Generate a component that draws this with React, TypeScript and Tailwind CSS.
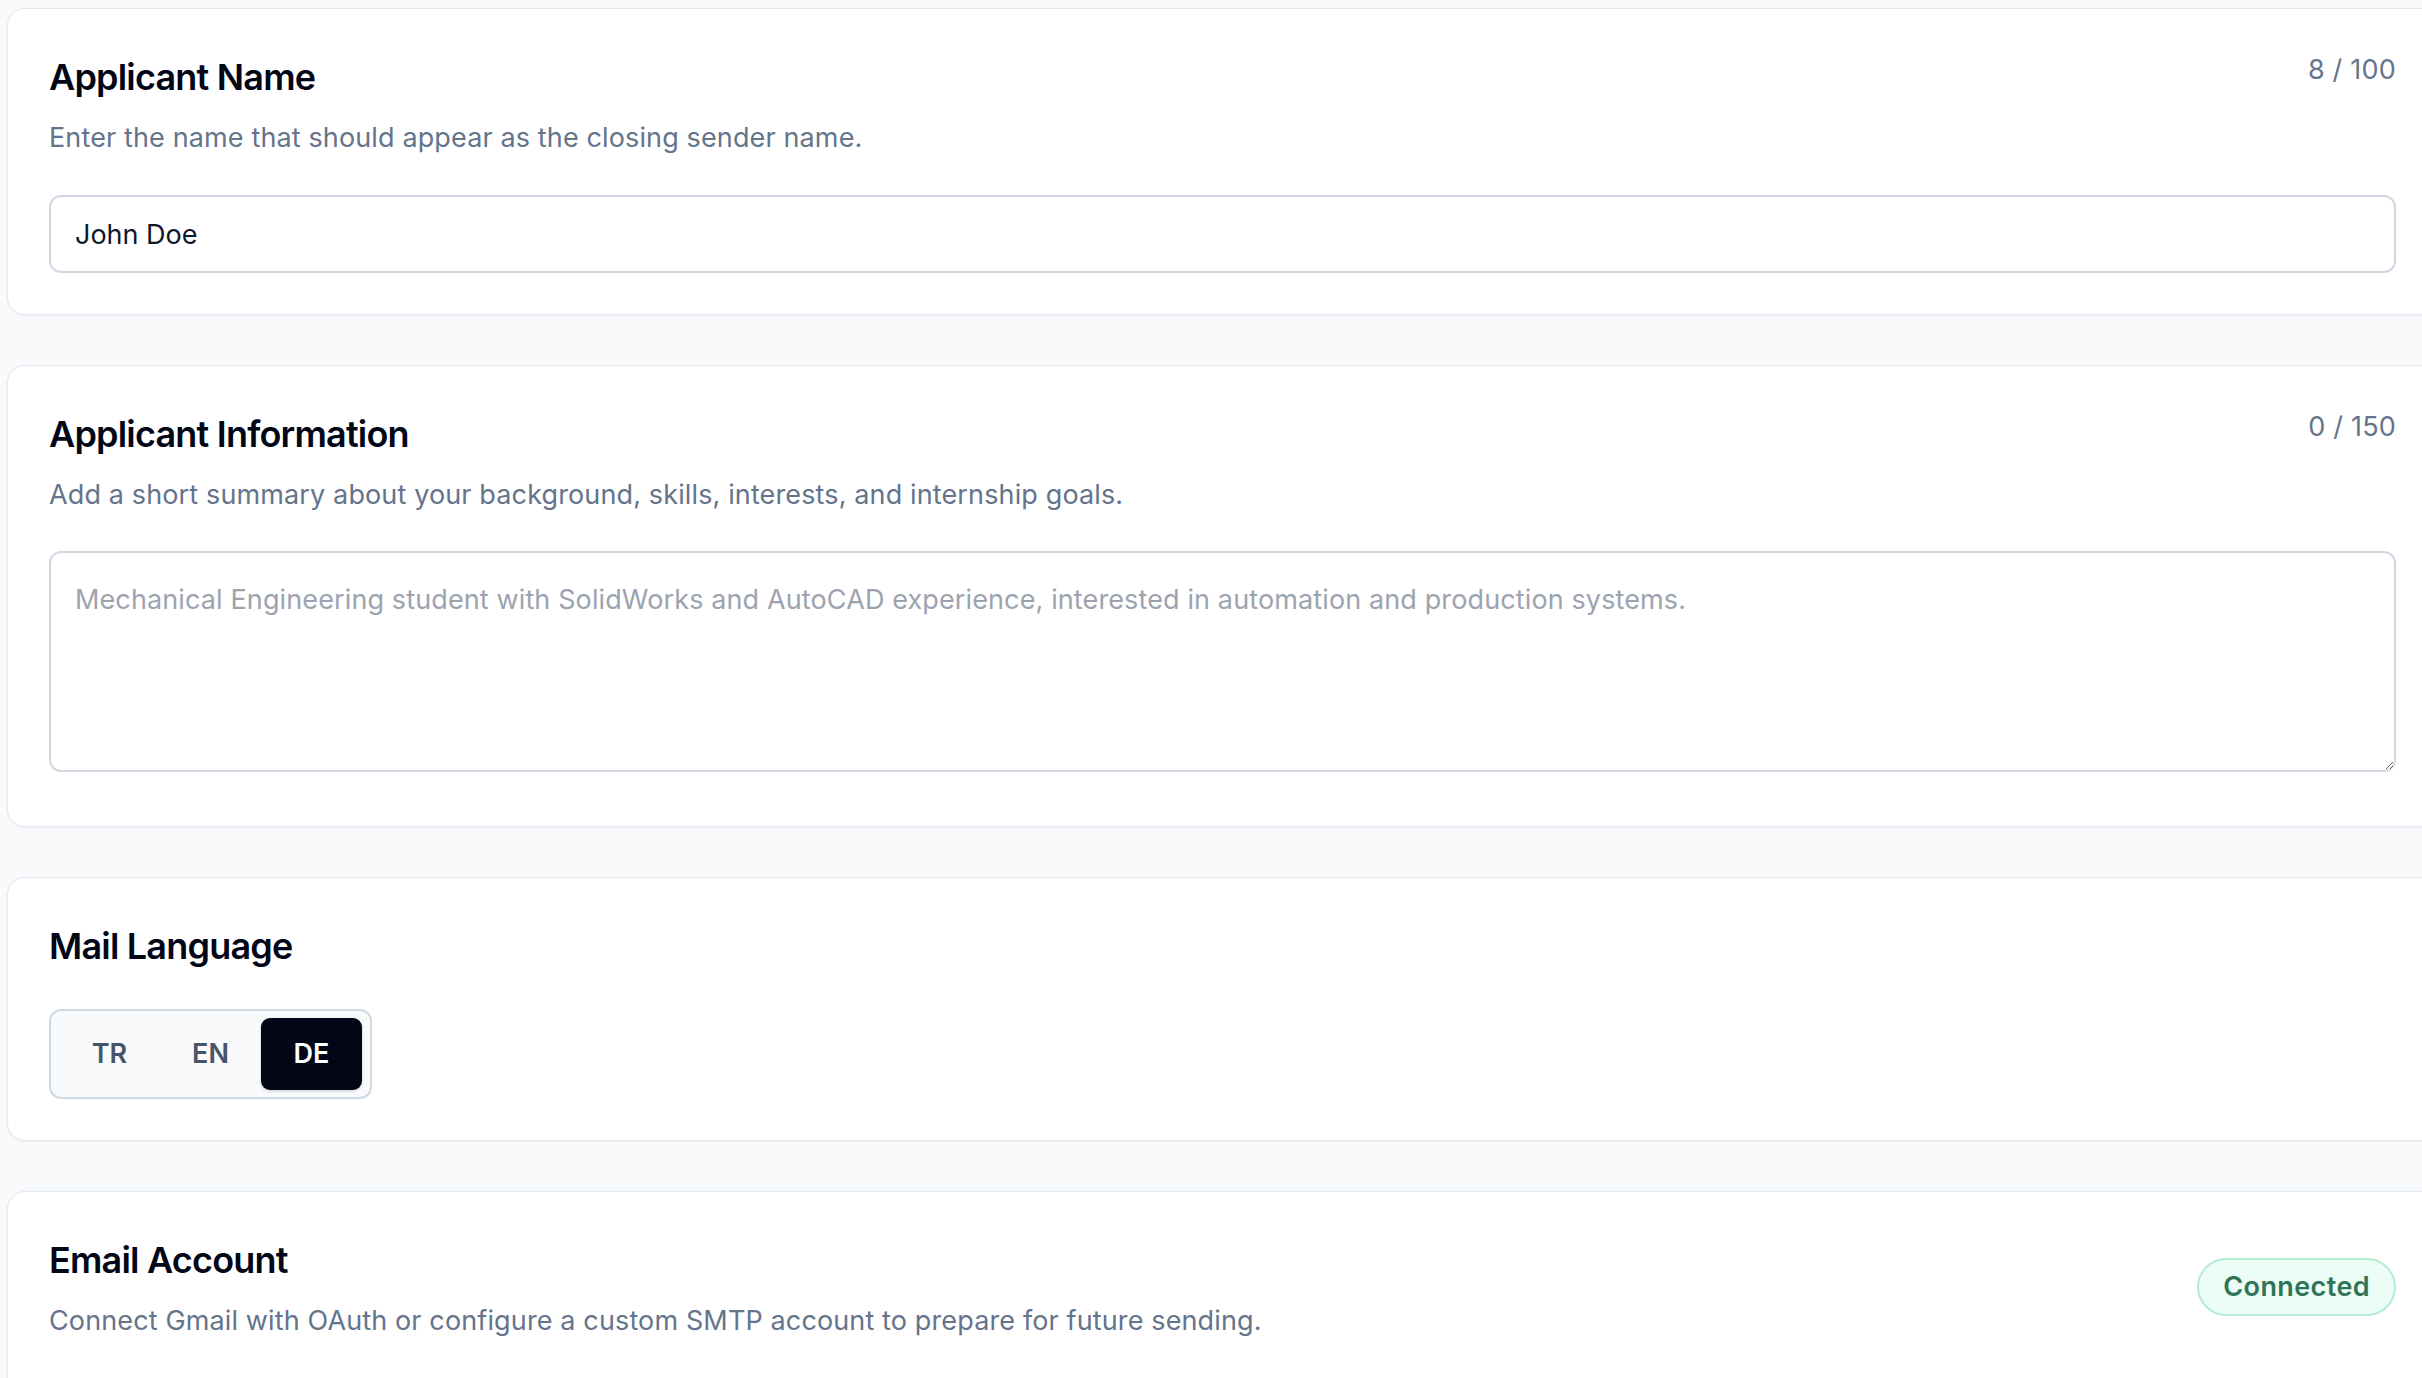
import React from "react";

function Card({ children }: { children: React.ReactNode }) {
  return (
    <section className="w-[2431px] shrink-0 rounded-[18px] border border-[#e2e8f0] bg-white px-[41px] pt-[41px] pb-[41px] shadow-[0_1px_3px_rgba(15,23,42,0.05)]">
      {children}
    </section>
  );
}

function Title({ children }: { children: React.ReactNode }) {
  return (
    <h2 className="pt-[1px] text-[36px] leading-[53px] font-semibold tracking-[-0.8px] text-[#020617]">
      {children}
    </h2>
  );
}

function Desc({ children }: { children: React.ReactNode }) {
  return (
    <p className="mt-[14px] text-[27px] leading-[40.5px] tracking-[0.13px] text-[#64748b]">{children}</p>
  );
}

export default function App() {
  const [lang, setLang] = React.useState("DE");
  return (
    <div className="h-screen w-screen overflow-hidden bg-[#f8fafc] font-['Inter',sans-serif]">
      <div className="flex flex-col items-start gap-[50px] pl-[7px] pt-[8px]">
        <Card>
          <div className="flex items-start justify-between">
            <div>
              <Title>Applicant Name</Title>
              <Desc>Enter the name that should appear as the closing sender name.</Desc>
            </div>
            <span className="text-[27px] leading-[40.5px] tracking-[0.2px] text-[#64748b]">8 / 100</span>
          </div>
          <input
            className="mt-[36px] block h-[78px] w-full rounded-[12px] border-2 border-[#d0d8e3] bg-white px-[24px] pt-[1px] text-[27px] text-[#0f172a] outline-none"
            defaultValue="John Doe"
          />
        </Card>

        <Card>
          <div className="flex items-start justify-between">
            <div>
              <Title>Applicant Information</Title>
              <Desc>Add a short summary about your background, skills, interests, and internship goals.</Desc>
            </div>
            <span className="text-[27px] leading-[40.5px] tracking-[0.2px] text-[#64748b]">0 / 150</span>
          </div>
          <textarea
            className="mt-[36px] mb-[13px] block h-[221px] w-full resize-y rounded-[12px] border-2 border-[#d0d8e3] bg-white px-[24px] py-[24px] text-[27px] leading-[46px] tracking-[0.12px] text-[#0f172a] outline-none placeholder:text-[#9ca3af]"
            placeholder="Mechanical Engineering student with SolidWorks and AutoCAD experience, interested in automation and production systems."
          />
        </Card>

        <Card>
          <Title>Mail Language</Title>
          <div className="mt-[36px] flex w-fit rounded-[12px] border-2 border-[#d0d8e3] bg-[#f8fafc] px-[8px] py-[7px]">
            {["TR", "EN", "DE"].map((l) => (
              <button
                key={l}
                onClick={() => setLang(l)}
                className={
                  l === lang
                    ? "flex h-[72px] w-[101px] items-center justify-center rounded-[9px] bg-[#020617] text-[27px] font-semibold text-white shadow-[0_1px_3px_rgba(2,6,23,0.2)]"
                    : "flex h-[72px] w-[101px] items-center justify-center rounded-[9px] text-[27px] font-semibold text-[#475569]"
                }
              >
                {l}
              </button>
            ))}
          </div>
        </Card>

        <Card>
          <div className="flex items-center justify-between">
            <div>
              <Title>Email Account</Title>
              <Desc>Connect Gmail with OAuth or configure a custom SMTP account to prepare for future sending.</Desc>
            </div>
            <span className="flex h-[58px] items-center rounded-full border-2 border-[#b6ecd2] bg-[#ecfdf5] px-[24px] text-[27px] font-semibold tracking-[0.4px] text-[#2f7457]">
              Connected
            </span>
          </div>
          <div className="h-[200px]" />
        </Card>
      </div>
    </div>
  );
}
